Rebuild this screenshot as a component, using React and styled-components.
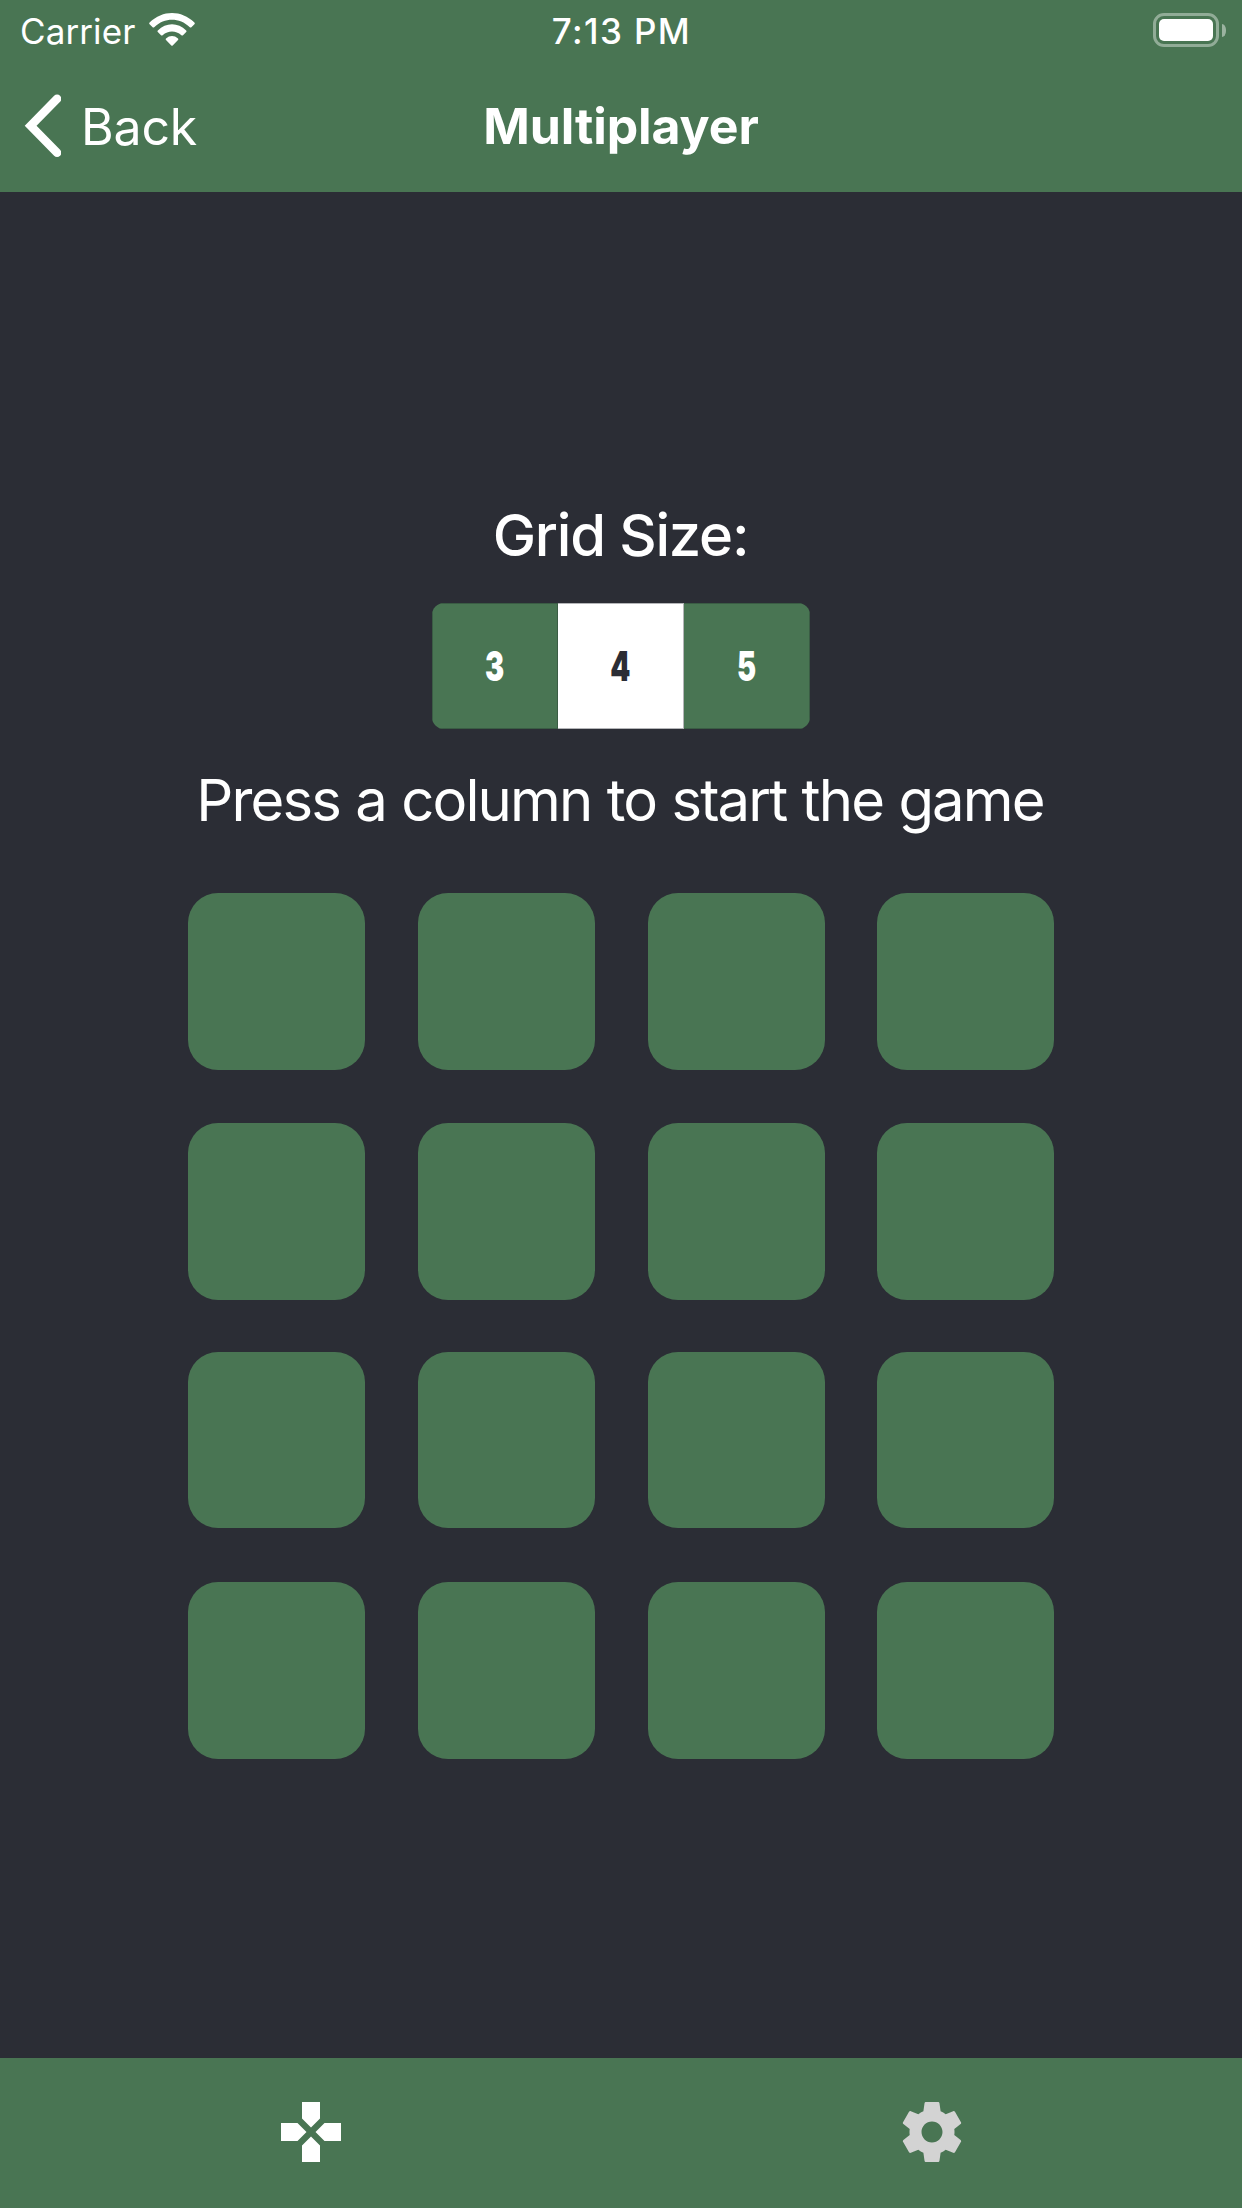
import React, { useState } from "react";
import styled, { createGlobalStyle } from "styled-components";

const green = "#497553";
const dark = "#2b2d35";

const GlobalStyle = createGlobalStyle`
  * { box-sizing: border-box; }
  body { margin: 0; background: ${dark}; }
  button { font: inherit; color: inherit; border: 0; padding: 0; margin: 0; background: none; }
`;

const Screen = styled.div`
  width: 1242px;
  height: 2208px;
  display: flex;
  flex-direction: column;
  background: ${dark};
  color: #fff;
  font-family: Inter, "Liberation Sans", sans-serif;
`;

const Header = styled.header`
  height: 192px;
  flex: none;
  background: ${green};
`;

const StatusBar = styled.div`
  height: 60px;
  padding: 2px 16px 0 20px;
  display: grid;
  grid-template-columns: 1fr auto 1fr;
  align-items: center;
  line-height: 44px;
`;

const CarrierGroup = styled.div`
  display: flex;
  align-items: center;
  gap: 12px;
`;

const Carrier = styled.span`
  width: 116px;
  font-size: 35px;
  letter-spacing: 0.1px;
  white-space: nowrap;
`;

const Clock = styled.span`
  font-size: 35px;
  font-weight: 500;
  letter-spacing: 1.4px;
  padding-right: 3px;
`;

const Wifi = styled.svg`
  width: 48px;
  height: 36px;
  margin-top: -2px;
`;

const BatteryGroup = styled.div`
  display: flex;
  align-items: center;
  justify-content: flex-end;
  gap: 3px;
  margin-top: -2px;
`;

const BatteryCase = styled.div`
  width: 66px;
  height: 34px;
  padding: 3px;
  border: 3px solid rgba(255, 255, 255, 0.4);
  border-radius: 11px;
`;

const BatteryLevel = styled.div`
  height: 100%;
  border-radius: 5px;
  background: #fff;
`;

const BatteryCap = styled.div`
  width: 4px;
  height: 13px;
  border-radius: 0 4px 4px 0 / 0 6px 6px 0;
  background: rgba(255, 255, 255, 0.45);
`;

const NavBar = styled.nav`
  height: 132px;
  padding: 0 23px;
  display: grid;
  grid-template-columns: 1fr auto 1fr;
  align-items: center;
`;

const BackButton = styled.button`
  display: flex;
  align-items: center;
  gap: 20px;
  font-size: 50px;
  line-height: 60px;
`;

const BackLabel = styled.span`
  padding-top: 2px;
  letter-spacing: -0.2px;
`;

const Chevron = styled.svg`
  width: 38px;
  height: 64px;
`;

const Title = styled.h1`
  margin: 0;
  font-size: 50px;
  font-weight: 700;
  line-height: 60px;
  letter-spacing: -0.1px;
`;

const Main = styled.main`
  flex: 1;
  display: flex;
  flex-direction: column;
  align-items: center;
  padding-top: 308px;
`;

const SizeLabel = styled.div`
  height: 70px;
  line-height: 70px;
  font-size: 58px;
  font-weight: 500;
  letter-spacing: -1.2px;
  padding-right: 1px;
`;

const Segments = styled.div`
  display: flex;
  height: 126px;
  margin-top: 33px;
  overflow: hidden;
  border-radius: 12px;
`;

const Segment = styled.button`
  width: 126px;
  flex: none;
  display: flex;
  align-items: center;
  justify-content: center;
  border: 1px solid ${(p) => (p.$active ? "#b4b5b8" : "#3a5c44")};
  background: ${(p) => (p.$active ? "#fff" : green)};
  color: ${(p) => (p.$active ? dark : "#fff")};
  & + & { border-left: 0; }
`;

const Digit = styled.span`
  font-size: 41px;
  font-weight: 900;
  line-height: 50px;
  transform: scaleX(0.7);
`;

const Prompt = styled.div`
  height: 70px;
  margin-top: 36px;
  padding-right: 2px;
  line-height: 70px;
  font-size: 58px;
  white-space: nowrap;
  letter-spacing: -1.85px;
  word-spacing: 0.8px;
`;

const Board = styled.div`
  margin-top: 58px;
  display: grid;
  grid-template-columns: 230px 230px 229px 177px;
  grid-template-rows: 230px 229px 230px 177px;
`;

const Tile = styled.button`
  width: 177px;
  height: ${(p) => (p.$short ? 176 : 177)}px;
  border-radius: 30px;
  background: ${green};
`;

const TabBar = styled.footer`
  height: 150px;
  flex: none;
  display: flex;
  background: ${green};
`;

const Tab = styled.button`
  flex: 1;
  display: flex;
  align-items: center;
  justify-content: center;
  padding-bottom: 2px;
  color: ${(p) => (p.$active ? "#fff" : "#d3d3d3")};
`;

const TabIcon = styled.svg`
  width: 72px;
  height: 72px;
  fill: currentColor;
`;

export default function App() {
  const [size, setSize] = useState(4);
  return (
    <>
      <GlobalStyle />
      <Screen>
        <Header>
          <StatusBar>
            <CarrierGroup>
              <Carrier>Carrier</Carrier>
              <Wifi viewBox="148 12 48 36" fill="#fff">
                <path d="M149.6 22.6C162.5 9.8 181.5 9.8 194.4 22.6Q195.2 23.4 194.4 24.2L191.4 27.2Q190.6 28 189.8 27.2C179.3 17.4 164.7 17.4 154.2 27.2Q153.4 28 152.6 27.2L149.6 24.2Q148.8 23.4 149.6 22.6Z" />
                <path d="M157.8 30.5C166 22.3 178 22.3 186.2 30.5Q187 31.3 186.2 32.1L183 35.2Q182.2 36 181.4 35.2C175.8 30.3 168.2 30.3 162.6 35.2Q161.8 36 161 35.2L157.8 32.1Q157 31.3 157.8 30.5Z" />
                <path d="M166 38.5C169.7 35.2 174.3 35.2 178 38.5Q178.8 39.3 178 40.1L172.7 45.4Q172 46.1 171.3 45.4L166 40.1Q165.2 39.3 166 38.5Z" />
              </Wifi>
            </CarrierGroup>
            <Clock>7:13 PM</Clock>
            <BatteryGroup>
              <BatteryCase><BatteryLevel /></BatteryCase>
              <BatteryCap />
            </BatteryGroup>
          </StatusBar>
          <NavBar>
            <BackButton>
              <Chevron viewBox="23.2 94 38 64" fill="none" stroke="#fff" strokeWidth="8.4" strokeLinecap="round">
                <path d="M57.3 98.8L30.8 125.7L57.3 152.8" />
              </Chevron>
              <BackLabel>Back</BackLabel>
            </BackButton>
            <Title>Multiplayer</Title>
          </NavBar>
        </Header>
        <Main>
          <SizeLabel>Grid Size:</SizeLabel>
          <Segments>
            {[3, 4, 5].map((n) => (
              <Segment key={n} $active={n === size} onClick={() => setSize(n)}>
                <Digit>{n}</Digit>
              </Segment>
            ))}
          </Segments>
          <Prompt>Press a column to start the game</Prompt>
          <Board>
            {Array.from({ length: 16 }, (_, i) => (
              <Tile key={i} $short={Math.floor(i / 4) === 2} aria-label={`Column ${(i % 4) + 1}`} />
            ))}
          </Board>
        </Main>
        <TabBar>
          <Tab $active aria-label="Play">
            <TabIcon viewBox="0 0 24 24">
              <path d="M15 7.5V2H9v5.5l3 3 3-3zM7.5 9H2v6h5.5l3-3-3-3zM9 16.5V22h6v-5.5l-3-3-3 3zM16.5 9l-3 3 3 3H22V9h-5.5z" />
            </TabIcon>
          </Tab>
          <Tab aria-label="Settings">
            <TabIcon viewBox="0 0 24 24">
              <path d="M19.43 12.98c.04-.32.07-.64.07-.98s-.03-.66-.07-.98l2.11-1.65c.19-.15.24-.42.12-.64l-2-3.46c-.12-.22-.39-.3-.61-.22l-2.49 1c-.52-.4-1.08-.73-1.69-.98l-.38-2.65C14.46 2.18 14.25 2 14 2h-4c-.25 0-.46.18-.49.42l-.38 2.65c-.61.25-1.17.59-1.69.98l-2.49-1c-.23-.09-.49 0-.61.22l-2 3.46c-.13.22-.07.49.12.64l2.11 1.65c-.04.32-.07.65-.07.98s.03.66.07.98l-2.11 1.65c-.19.15-.24.42-.12.64l2 3.46c.12.22.39.3.61.22l2.49-1c.52.4 1.08.73 1.69.98l.38 2.65c.03.24.24.42.49.42h4c.25 0 .46-.18.49-.42l.38-2.65c.61-.25 1.17-.59 1.69-.98l2.49 1c.23.09.49 0 .61-.22l2-3.46c.12-.22.07-.49-.12-.64l-2.11-1.65zM12 15.5c-1.93 0-3.5-1.57-3.5-3.5s1.57-3.5 3.5-3.5 3.5 1.57 3.5 3.5-1.57 3.5-3.5 3.5z" />
            </TabIcon>
          </Tab>
        </TabBar>
      </Screen>
    </>
  );
}
